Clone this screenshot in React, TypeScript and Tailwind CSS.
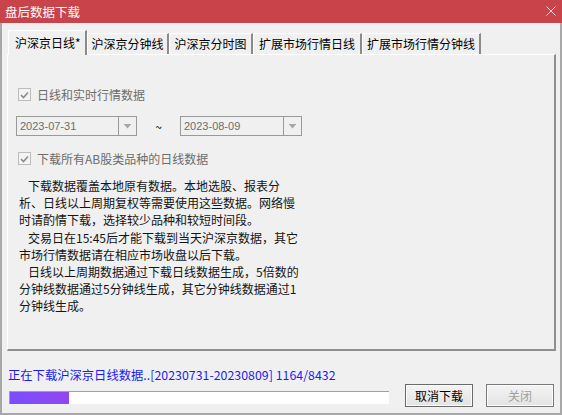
import React from "react";

const FONT = { fontFamily: '"Noto Sans CJK SC", "Noto Sans", sans-serif' };

function Checkbox() {
  return (
    <div className="w-[13px] h-[13px] border border-[#bcbcbc] bg-[#f4f4f4] flex items-center justify-center shrink-0">
      <svg width="9" height="8" viewBox="0 0 9 8">
        <path d="M1 4 L3.5 6.5 L8 1.5" fill="none" stroke="#8a8a8a" strokeWidth="1.6" />
      </svg>
    </div>
  );
}

function Combo({ value, width }: { value: string; width: string }) {
  return (
    <div className={`${width} h-[20px] border border-[#9a9a9a] bg-[#f0f0f0] flex`}>
      <div
        className="flex-1 pl-[3px] text-[11px] leading-[18px] text-[#6d6d6d]"
        style={{ fontFamily: '"Liberation Sans", sans-serif' }}
      >
        {value}
      </div>
      <div className="w-[18px] border-l border-[#9a9a9a] flex items-center justify-center">
        <svg width="7" height="5" viewBox="0 0 7 5">
          <path d="M0 0h7v1H0z M0.5 1h6L3.5 4.5z" fill="#a8a8a8" />
        </svg>
      </div>
    </div>
  );
}

const tabs = [
  { label: "沪深京日线*", w: "w-[79px]", active: true },
  { label: "沪深京分钟线", w: "w-[82px]", active: false },
  { label: "沪深京分时图", w: "w-[84px]", active: false },
  { label: "扩展市场行情日线", w: "w-[109px]", active: false },
  { label: "扩展市场行情分钟线", w: "w-[119px]", active: false },
];

const lines: { t: string; indent: boolean }[] = [
  { t: "下载数据覆盖本地原有数据。本地选股、报表分", indent: true },
  { t: "析、日线以上周期复权等需要使用这些数据。网络慢", indent: false },
  { t: "时请酌情下载，选择较少品种和较短时间段。", indent: false },
  { t: "交易日在15:45后才能下载到当天沪深京数据，其它", indent: true },
  { t: "市场行情数据请在相应市场收盘以后下载。", indent: false },
  { t: "日线以上周期数据通过下载日线数据生成，5倍数的", indent: true },
  { t: "分钟线数据通过5分钟线生成，其它分钟线数据通过1", indent: false },
  { t: "分钟线生成。", indent: false },
];

export default function App() {
  return (
    <div className="w-[562px] h-[415px] flex flex-col bg-[#f0f0f0] overflow-hidden" style={FONT}>
      {/* Title bar */}
      <div className="h-[23px] bg-[#c9434a] flex items-center justify-between pl-[5px] pr-[6px] shrink-0">
        <span className="text-white text-[12.5px] leading-[14px]">盘后数据下载</span>
        <svg width="10" height="10" viewBox="0 0 10 10" className="mb-[1px]">
          <path d="M0.5 0.5 L9.5 9.5 M9.5 0.5 L0.5 9.5" stroke="#f4d4d6" strokeWidth="1" />
        </svg>
      </div>

      {/* Body */}
      <div className="flex-1 flex flex-col border-l-2 border-r-2 border-b-2 border-[#a8a8a8] pl-[5px] pr-[4px] pt-[7px] pb-[6px]">
        {/* Tabs */}
        <div className="h-[24px] flex items-end pl-[1px] relative z-10">
          {tabs.map((tab) =>
            tab.active ? (
              <div
                key={tab.label}
                className={`${tab.w} h-[25px] -mb-[1px] bg-[#f0f0f0] border-l border-t border-white border-r-2 border-r-[#8a8a8a] pl-[6px] pt-[4px] text-[12px] leading-[16px] text-black whitespace-nowrap`}
              >
                {tab.label}
              </div>
            ) : (
              <div
                key={tab.label}
                className={`${tab.w} h-[21px] bg-[#f0f0f0] border-l border-t border-white border-r-2 border-r-[#8a8a8a] flex items-center justify-center text-[12px] leading-[16px] text-black whitespace-nowrap`}
              >
                {tab.label}
              </div>
            )
          )}
        </div>

        {/* Panel */}
        <div className="h-[297px] border-l border-t border-white border-r-2 border-b-2 border-r-[#8f8f8f] border-b-[#8f8f8f] flex flex-col">
          <div className="mt-[33px] ml-[10px] h-[13px] flex items-center gap-[6px]">
            <Checkbox />
            <span className="text-[12px] leading-[14px] text-[#6d6d6d]">日线和实时行情数据</span>
          </div>

          <div className="mt-[15px] ml-[8px] flex items-center">
            <Combo value="2023-07-31" width="w-[121px]" />
            <div className="w-[43px] text-center text-[12px] leading-[14px] text-black pt-[2px]">~</div>
            <Combo value="2023-08-09" width="w-[122px]" />
          </div>

          <div className="mt-[16px] ml-[10px] h-[13px] flex items-center gap-[6px]">
            <Checkbox />
            <span className="text-[12px] leading-[14px] text-[#6d6d6d]">下载所有AB股类品种的日线数据</span>
          </div>

          <div className="mt-[12px] ml-[11px] flex flex-col text-[12px] leading-[17.2px] text-[#141414]">
            {lines.map((l, i) => (
              <div key={i} className={`whitespace-nowrap ${l.indent ? "pl-[9px]" : ""}`}>
                {l.t}
              </div>
            ))}
          </div>
        </div>

        {/* Status */}
        <div className="mt-[16px] h-[17px] pl-[1px] text-[12.3px] leading-[17px] text-[#1a1af5] whitespace-nowrap">
          正在下载沪深京日线数据<span className="tracking-[0.05px]">..[20230731-20230809] 1164/8432</span>
        </div>

        {/* Progress + buttons */}
        <div className="h-[23px] flex items-start">
          <div className="mt-[7px] ml-[2px] w-[380px] h-[13px] bg-white border-t border-l border-[#a0a0a0] flex">
            <div className="w-[59px] h-full bg-gradient-to-r from-[#7a4dff] to-[#9145f0]" />
          </div>
          <button className="ml-[16px] w-[68px] h-[23px] border border-[#6a6a6a] shadow-[inset_0_0_0_1px_#fbfbfb] bg-gradient-to-b from-[#f4f4f4] to-[#e3e3e3] text-[12px] leading-[14px] text-black">
            取消下载
          </button>
          <button className="ml-[13px] w-[68px] h-[23px] border border-[#7a7a7a] shadow-[inset_0_0_0_1px_#fbfbfb] bg-gradient-to-b from-[#f4f4f4] to-[#e3e3e3] text-[12px] leading-[14px] text-[#a0a0a0]">
            关闭
          </button>
        </div>
      </div>
    </div>
  );
}
